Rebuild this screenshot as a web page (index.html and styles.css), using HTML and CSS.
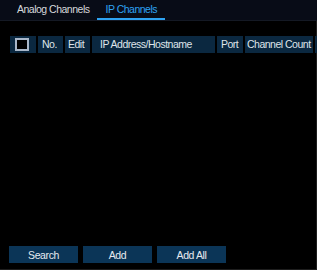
FILE: index.html
```html
<!DOCTYPE html>
<html>
<head>
    <meta name="viewport" content="width=device-width, initial-scale=1.0">
    <title>IP Channels</title>
    <link rel="stylesheet" href="styles.css">
</head>
<body>
    <div class="tabs">
        <div class="tab">Analog Channels</div>
        <div class="tab active">IP Channels</div>
    </div>
    <div class="panel">
        <div class="table">
            <div class="cell check"><span class="box"></span></div>
            <div class="cell no">No.</div>
            <div class="cell edit">Edit</div>
            <div class="cell ip">IP Address/Hostname</div>
            <div class="cell port">Port</div>
            <div class="cell count">Channel Count</div>
            <div class="cell more"></div>
        </div>
        <div class="buttons">
            <button type="button">Search</button>
            <button type="button">Add</button>
            <button type="button">Add All</button>
        </div>
    </div>
</body>
</html>
```

FILE: styles.css
```css
body {
    margin: 0;
    width: 317px;
    height: 270px;
    background: #000;
    font-family: "Liberation Sans", Arial, sans-serif;
    font-size: 10.5px;
    letter-spacing: -0.5px;
    overflow: hidden;
}
.tabs {
    display: flex;
    height: 20px;
    padding-left: 9px;
    background: #080c17;
    border-bottom: 1px solid #141924;
}
.tab {
    padding: 0 8px;
    line-height: 19px;
    color: #d6d8dc;
}
.tab.active {
    padding: 0 8px;
    color: #2ea3f2;
    box-shadow: inset 0 -2px 0 #2ea3f2;
}
.panel {
    height: 249px;
    box-sizing: border-box;
    border-right: 1px solid #1e1e1e;
    border-bottom: 1px solid #1e1e1e;
    display: flex;
    flex-direction: column;
}
.table {
    display: flex;
    gap: 2px;
    margin: 15px 0 0 10px;
    height: 17px;
}
.cell {
    background: #0b2840;
    color: #dfe4ea;
    line-height: 17px;
    white-space: nowrap;
    box-sizing: border-box;
    flex: none;
}
.check {
    width: 26px;
    display: flex;
    align-items: center;
    padding-left: 5px;
}
.box {
    width: 14px;
    height: 13px;
    box-sizing: border-box;
    border: 2px solid #a9b7c9;
    background: #000;
}
.no { width: 25px; padding-left: 4px; }
.edit { width: 25px; padding-left: 3px; }
.ip { width: 123px; padding-left: 8px; }
.port { width: 26px; padding-left: 4px; }
.count { width: 68px; padding-left: 2px; }
.more { width: 10px; }
.buttons {
    margin-top: auto;
    margin-bottom: 6px;
    padding-left: 9px;
    display: flex;
    gap: 5px;
}
button {
    width: 69px;
    height: 17px;
    border: none;
    padding: 0;
    background: #0b3557;
    color: #e6eaf0;
    font-family: "Liberation Sans", Arial, sans-serif;
    font-size: 10.5px;
    letter-spacing: -0.4px;
}
```
